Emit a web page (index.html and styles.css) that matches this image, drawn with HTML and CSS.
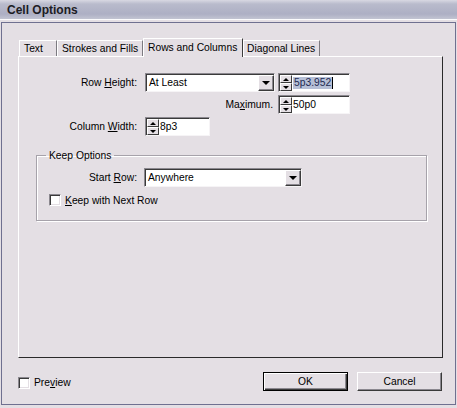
FILE: index.html
```html
<!DOCTYPE html>
<html lang="en">
<head>
    <meta charset="UTF-8">
    <link rel="stylesheet" href="styles.css">
</head>
<body>
<div class="dialog">
    <div class="titlebar">Cell Options</div>
    <div class="client">
        <!-- tabs -->
        <ul class="tabs">
            <li class="t-text">Text</li>
            <li class="t-strokes">Strokes and Fills</li>
            <li class="t-rows active">Rows and Columns</li>
            <li class="t-diag">Diagonal Lines</li>
        </ul>

        <div class="panel">
            <div class="sizes">
                <label class="lbl">Row <u>H</u>eight:</label>
                <div class="select size-sel"><span class="text">At Least</span><span class="drop"></span></div>
                <div class="spin"><span class="arrows"><i class="up"></i><i class="down"></i></span><span class="val"><b class="sel">5p3.952</b><s class="caret"></s></span></div>

                <label class="lbl max">Ma<u>x</u>imum.</label>
                <div class="spin"><span class="arrows"><i class="up"></i><i class="down"></i></span><span class="val">50p0</span></div>

                <label class="lbl">Column <u>W</u>idth:</label>
                <div class="spin narrow"><span class="arrows"><i class="up"></i><i class="down"></i></span><span class="val">8p3</span></div>
            </div>

            <fieldset class="group">
                <legend>Keep Options</legend>
                <div class="startrow">
                    <label class="lbl">Start <u>R</u>ow:</label>
                    <div class="select start-sel"><span class="text">Anywhere</span><span class="drop"></span></div>
                </div>
                <div class="check keep"><span class="box"></span><span><u>K</u>eep with Next Row</span></div>
            </fieldset>
        </div>

        <div class="footer">
            <div class="check"><span class="box"></span><span>Pre<u>v</u>iew</span></div>
            <div class="buttons">
                <button class="btn default">OK</button>
                <button class="btn">Cancel</button>
            </div>
        </div>
    </div>
</div>
</body>
</html>
```

FILE: styles.css
```css
* {
    margin: 0;
    padding: 0;
    box-sizing: border-box;
}

body {
    width: 457px;
    height: 408px;
    background: #e4dfe4;
    font-family: "Liberation Sans", Arial, sans-serif;
    font-size: 10.3px;
    color: #000;
    overflow: hidden;
}

u {
    text-decoration: underline;
}

.dialog {
    width: 457px;
    height: 408px;
}

.titlebar {
    height: 20px;
    padding: 3px 0 0 7px;
    font-size: 12px;
    font-weight: bold;
    color: #1c1c24;
    background: linear-gradient(#d8d8e2 0, #b9bbcc 4px, #adafc4 14px, #c2c4d2 19px);
    border-bottom: 1px solid #fbfbfd;
}

.client {
    margin: 2px 1px 0 1px;
    height: 383px;
    border: 1px solid #6f7090;
    padding: 14px 12px 0 16px;
}

/* tabs */
.tabs {
    display: flex;
    align-items: flex-end;
    list-style: none;
    padding-left: 1px;
    height: 19px;
}

.tabs li {
    height: 16px;
    padding: 1px 0 0 4px;
    border-top: 1px solid #fff;
    border-left: 1px solid #fff;
    border-right: 1px solid #7c7a80;
    white-space: nowrap;
    line-height: 13px;
}

.tabs .t-text { width: 38px; }
.tabs .t-strokes { width: 86px; }
.tabs .t-rows { width: 100px; }
.tabs .t-diag { width: 77px; padding-left: 3px; }

.tabs li.active {
    height: 19px;
    padding: 2px 0 0 4px;
    margin-bottom: -1px;
    background: #e4dfe4;
    position: relative;
    z-index: 1;
    border-right: 1px solid #3c3c3c;
}

.panel {
    height: 302px;
    border-top: 1px solid #fff;
    border-left: 1px solid #fff;
    border-right: 1px solid #2a2a2a;
    border-bottom: 1px solid #2a2a2a;
    padding-top: 16px;
}

.sizes {
    display: grid;
    grid-template-columns: 118px 130px 67px;
    column-gap: 8px;
    row-gap: 3px;
    grid-auto-rows: 19px;
}

.sizes .spin {
    margin-left: -5px;
}

.lbl {
    display: block;
    text-align: right;
    line-height: 19px;
    white-space: nowrap;
}

.lbl.max {
    grid-column: 2;
    padding-right: 2px;
}

.sizes .narrow {
    margin-left: 0;
    width: 65px;
}

/* sunken fields */
.select,
.spin {
    height: 19px;
    background: #fff;
    border-top: 1px solid #8b888f;
    border-left: 1px solid #8b888f;
    border-right: 1px solid #f6f4f6;
    border-bottom: 1px solid #f6f4f6;
    box-shadow: inset 1px 1px 0 #3a3a3a;
    display: flex;
}

.select .text {
    flex: 1;
    padding: 3px 0 0 3px;
    white-space: nowrap;
    overflow: hidden;
}

.select .drop {
    width: 16px;
    margin: 1px 0 0 0;
    background: #e4dfe4;
    border-top: 1px solid #fff;
    border-left: 1px solid #fff;
    border-right: 1px solid #3a3a3a;
    border-bottom: 1px solid #3a3a3a;
    box-shadow: inset -1px -1px 0 #8b888f;
    display: flex;
    align-items: center;
    justify-content: center;
}

.select .drop::after {
    content: "";
    border-left: 4px solid transparent;
    border-right: 4px solid transparent;
    border-top: 4px solid #000;
}

.spin .arrows {
    width: 12px;
    margin: 1px 0 0 1px;
    display: flex;
    flex-direction: column;
}

.spin .arrows i {
    flex: 1;
    background: #e4dfe4;
    border-top: 1px solid #fff;
    border-left: 1px solid #fff;
    border-right: 1px solid #3a3a3a;
    border-bottom: 1px solid #3a3a3a;
    display: flex;
    align-items: center;
    justify-content: center;
}

.spin .arrows .up::after {
    content: "";
    border-left: 3px solid transparent;
    border-right: 3px solid transparent;
    border-bottom: 3px solid #000;
}

.spin .arrows .down::after {
    content: "";
    border-left: 3px solid transparent;
    border-right: 3px solid transparent;
    border-top: 3px solid #000;
}

.spin .val {
    flex: 1;
    padding: 3px 0 0 1px;
    display: flex;
    align-items: flex-start;
    white-space: nowrap;
}

.spin .sel {
    font-weight: normal;
    background: #b6bfd6;
    color: #1e2a52;
    padding: 0 1px;
    line-height: 12px;
}

.spin .caret {
    width: 1px;
    height: 12px;
    background: #000;
}

/* keep options */
.group {
    margin: 13px 15px 0 17px;
    border: 1px solid #a6a2aa;
    box-shadow: inset 1px 1px 0 #fff, 1px 1px 0 #fff;
    padding: 6px 0 14px 0;
}

.group legend {
    margin-left: 9px;
    padding: 0 3px;
    line-height: 13px;
}

.startrow {
    display: grid;
    grid-template-columns: 100px 158px;
    column-gap: 7px;
    height: 19px;
}

.check {
    display: flex;
    align-items: center;
    gap: 4px;
}

.check .box {
    width: 12px;
    height: 12px;
    background: #fff;
    border-top: 1px solid #8b888f;
    border-left: 1px solid #8b888f;
    border-right: 1px solid #fff;
    border-bottom: 1px solid #fff;
    box-shadow: inset 1px 1px 0 #3a3a3a, inset -1px -1px 0 #e4dfe4;
}

.keep {
    margin: 7px 0 0 12px;
}

/* bottom */
.footer {
    display: flex;
    justify-content: space-between;
    align-items: center;
    margin-top: 14px;
    padding-right: 1px;
}

.footer .check {
    margin-top: 2px;
}

.buttons {
    display: flex;
    gap: 9px;
}

.btn {
    width: 85px;
    height: 19px;
    font-family: "Liberation Sans", Arial, sans-serif;
    font-size: 10.3px;
    background: #e4dfe4;
    border-top: 1px solid #fff;
    border-left: 1px solid #fff;
    border-right: 1px solid #3a3a3a;
    border-bottom: 1px solid #3a3a3a;
    box-shadow: inset -1px -1px 0 #8b888f;
}

.btn.default {
    border: 1px solid #000;
    box-shadow: inset 1px 1px 0 #fff, inset -1px -1px 0 #3a3a3a, inset -2px -2px 0 #8b888f;
}
```
